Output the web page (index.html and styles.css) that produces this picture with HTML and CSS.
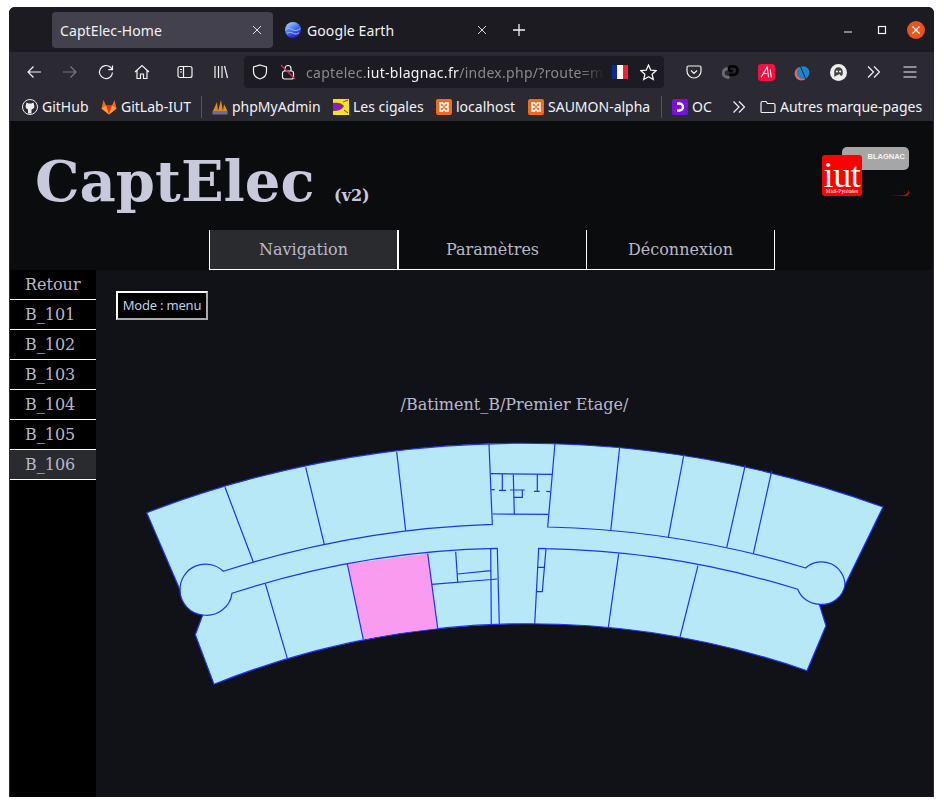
FILE: index.html
```html
<!DOCTYPE html>
<html lang="fr">
<head>
<meta charset="utf-8">
<title>CaptElec-Home</title>
<link rel="stylesheet" href="styles.css">
</head>
<body>
<div class="window">
  <div class="tabbar">
    <div class="tab tab-active"><span class="tab-title">CaptElec-Home</span><svg class="ico12" viewBox="0 0 12 12"><path d="M2 2l8 8M10 2l-8 8"/></svg></div>
    <div class="tab"><svg class="fav" viewBox="0 0 16 16"><defs><linearGradient id="ge" x1="0" y1="0" x2="0.6" y2="1"><stop offset="0" stop-color="#d5e2ff"/><stop offset=".5" stop-color="#4a7df0"/><stop offset="1" stop-color="#2a17c8"/></linearGradient></defs><circle cx="8" cy="8" r="8" fill="url(#ge)"/><path d="M0.600 8c3-3 5-1 7.400 0s5 .5 7.400-1.500M1.500 11.500c3-2 5-1 7 0s4 .5 5.500-1" fill="none" stroke="#a9c4ff" stroke-width="1"/></svg><span class="tab-title">Google Earth</span><svg class="ico12" viewBox="0 0 12 12"><path d="M2 2l8 8M10 2l-8 8"/></svg></div>
    <svg class="plus" viewBox="0 0 14 14"><path d="M7 1v12M1 7h12"/></svg>
    <div class="winctl">
      <svg class="ctl" viewBox="0 0 18 18"><path d="M5 11h8"/></svg>
      <svg class="ctl" viewBox="0 0 18 18"><rect x="5.500" y="5.500" width="7" height="7"/></svg>
      <div class="close"><svg viewBox="0 0 10 10"><path d="M1.500 1.500l7 7M8.500 1.500l-7 7"/></svg></div>
    </div>
  </div>

  <div class="toolbar">
    <div class="slot"><svg class="tb" viewBox="0 0 16 16"><path d="M15 8H2M7.500 2.500L2 8l5.500 5.500"/></svg></div>
    <div class="slot"><svg class="tb tb-off" viewBox="0 0 16 16"><path d="M1 8h13M8.500 2.500L14 8l-5.500 5.500"/></svg></div>
    <div class="slot"><svg class="tb" viewBox="0 0 16 16"><path d="M14.500 8.500A6.500 6.500 0 1 1 12.500 3.300L14.500 5.500M14.500 1.500v4.200h-4.200"/></svg></div>
    <div class="slot"><svg class="tb" viewBox="0 0 16 16"><path d="M1 8l7-6.500L15 8M3 6.500V14.500h3.500V10h3v4.500H13V6.500"/></svg></div>
    <div class="slot slot-sep"><svg class="tb" viewBox="0 0 16 16"><rect x="1" y="2.500" width="14" height="11" rx="2"/><path d="M6.500 2.500v11M3 5.500h2M3 8h2"/></svg></div>
    <div class="slot"><svg class="tb" viewBox="0 0 16 16"><path d="M2 2v12M5.500 2v12M9 2v12M11.500 2l3 12"/></svg></div>
    <div class="urlbar">
      <svg class="tb shield" viewBox="0 0 16 16"><path d="M8 1l6.500 2v4.500c0 4-3 6.500-6.500 7.500-3.500-1-6.500-3.500-6.500-7.500V3z"/></svg>
      <svg class="tb lock" viewBox="0 0 16 16"><rect x="2.500" y="7" width="11" height="8" rx="2"/><path d="M5 7V4.500a3 3 0 0 1 6 0V7"/><path class="lock-strike" d="M1 1l14 14"/></svg>
      <div class="url"><span class="dim">captelec.</span>iut-blagnac.fr<span class="dim">/index.php/?route=m</span></div>
      <div class="flag"><i class="fb"></i><i class="fw"></i><i class="fr"></i></div>
      <svg class="tb star" viewBox="0 0 16 16"><path d="M8 1l2.100 4.700 5.100.5-3.800 3.400 1.100 5L8 12l-4.500 2.600 1.100-5L.8 6.200l5.100-.5z"/></svg>
    </div>
    <div class="slot"><svg class="tb" viewBox="0 0 16 16"><path d="M2.500 2h11A1.500 1.500 0 0 1 15 3.500V7A7 7 0 0 1 1 7V3.500A1.500 1.500 0 0 1 2.500 2zM5 6.500l3 3 3-3"/></svg></div>
    <div class="slot"><svg class="ext" viewBox="0 0 18 18"><path d="M9 5H6a4.500 4.500 0 0 0-.5 9H8" fill="none" stroke="#6e6e6e" stroke-width="3"/><path d="M7.500 11.500H12a4.500 4.500 0 0 0 0-9H10a2.500 2.500 0 0 0 0 5h1.500" fill="none" stroke="#050505" stroke-width="3"/></svg></div>
    <div class="slot"><svg class="ext" viewBox="0 0 16 16"><rect width="16" height="16" rx="3" fill="#f5103f"/><path d="M3 12.500L8.500 3 10 12.500M5.500 9H9.500M11.500 5l1 7.500" fill="none" stroke="#fff"/></svg></div>
    <div class="slot"><svg class="ext" viewBox="0 0 16 16"><circle cx="7" cy="9" r="6.500" fill="#e5646a"/><circle cx="8.500" cy="8" r="6" fill="#1d86c9"/><path d="M5.500 1L11 14" stroke="#16324a"/></svg></div>
    <div class="slot"><svg class="ext" viewBox="0 0 16 16"><circle cx="8" cy="8" r="8" fill="#eee"/><path d="M4 12V7a4 4 0 0 1 8 0v2.500a1.500 1.500 0 0 1-3 0" fill="#444"/><circle cx="6.500" cy="7" r="1" fill="#eee"/><circle cx="9.500" cy="7" r="1" fill="#eee"/></svg></div>
    <div class="slot"><svg class="tb" viewBox="0 0 16 16"><path d="M2 2.500L7.500 8 2 13.500M8 2.500L13.500 8 8 13.500"/></svg></div>
    <div class="slot"><svg class="tb" viewBox="0 0 16 16"><path d="M1.500 3h13M1.500 8h13M1.500 13h13"/></svg></div>
  </div>

  <div class="bookmarks">
    <div class="bm bm-github"><svg class="fav" viewBox="0 0 16 16"><circle cx="8" cy="8" r="7.500" fill="#2b2a33" stroke="#eee"/><path d="M4 5.500L4.500 3.500l2 1h3l2-1 .5 2c1 2.500 0 4.500-2.500 5v4h-3.500v-4C4 10 3 8 4 5.500z" fill="#eee"/></svg><span>GitHub</span></div>
    <div class="bm bm-gitlab"><svg class="fav" viewBox="0 0 16 16"><path d="M8 15.500L.5 9.500 2.500 1 5 6.500h6l2.500-5.500 2 8.500z" fill="#f0691f"/><path d="M8 15.500L5 6.500h6z" fill="#e5331f"/><path d="M8 15.500L.5 9.500 5 6.500zM8 15.500l7.500-6L11 6.500z" fill="#fba124"/></svg><span>GitLab-IUT</span></div>
    <i class="bm-sep"></i>
    <div class="bm bm-pma"><svg class="fav" viewBox="0 0 16 16"><path d="M1 12L5 3l1 9zM6 12L9 1l2 11zM11 12L12 5l3.500 7z" fill="#e58a1f"/><rect x="0.500" y="12" width="15" height="3.500" fill="#6b6f9f"/></svg><span>phpMyAdmin</span></div>
    <div class="bm bm-cig"><svg class="fav" viewBox="0 0 16 16"><rect width="16" height="16" fill="#f5e616"/><path d="M0 4c5-1 9 0 11 3-2 4-6 5-11 5z" fill="#8b1fb8"/><path d="M10 3l5-2M11 11l4 3" stroke="#8b1fb8"/></svg><span>Les cigales</span></div>
    <div class="bm bm-local"><svg class="fav" viewBox="0 0 16 16"><rect width="16" height="16" rx="2" fill="#f26a1b"/><path d="M4 4h2.500l1.500 2 1.500-2H12v3l-2 1 2 1v3H9.500L8 10l-1.500 2H4V9l2-1-2-1z" fill="none" stroke="#fff" stroke-width="1.600"/></svg><span>localhost</span></div>
    <div class="bm bm-saumon"><svg class="fav" viewBox="0 0 16 16"><rect width="16" height="16" rx="2" fill="#f26a1b"/><path d="M4 4h2.500l1.500 2 1.500-2H12v3l-2 1 2 1v3H9.500L8 10l-1.500 2H4V9l2-1-2-1z" fill="none" stroke="#fff" stroke-width="1.600"/></svg><span>SAUMON-alpha</span></div>
    <i class="bm-sep"></i>
    <div class="bm bm-oc"><svg class="fav" viewBox="0 0 16 16"><rect width="16" height="16" rx="2" fill="#7b10dc"/><path d="M5 4.500h2.500a3.500 3.500 0 0 1 0 7H5" fill="none" stroke="#fff" stroke-width="2.400"/></svg><span>OC</span></div>
    <svg class="bm-more" viewBox="0 0 14 14"><path d="M1.500 1.500L7 7l-5.500 5.500M7 1.500L12.500 7 7 12.500"/></svg>
    <div class="bm bm-folder"><svg class="tb" viewBox="0 0 16 16"><path d="M1 4a1.500 1.500 0 0 1 1.500-1.500H6L7.500 4.500h6A1.500 1.500 0 0 1 15 6v6.500a1 1 0 0 1-1 1H2a1 1 0 0 1-1-1z"/></svg><span>Autres marque-pages</span></div>
  </div>

  <div class="page">
    <header class="head">
      <h1 class="title">CaptElec <small class="ver">(v2)</small></h1>
      <div class="logo">
        <div class="logo-grey">BLAGNAC</div>
        <svg class="logo-corner" viewBox="0 0 20 8"><defs><linearGradient id="lc" x1="0" y1="0" x2="1" y2="0"><stop offset="0" stop-color="#e00" stop-opacity="0"/><stop offset=".6" stop-color="#e00"/></linearGradient></defs><path d="M0 7.500H13Q18 7.500 20 2V4Q20 8 16 8H0Z" fill="url(#lc)"/></svg>
        <div class="logo-red"><span class="iut">iut</span><span class="midi">Midi-Pyrénées</span></div>
      </div>
    </header>
    <nav class="nav">
      <a class="nav-item nav-on">Navigation</a>
      <a class="nav-item">Paramètres</a>
      <a class="nav-item">Déconnexion</a>
    </nav>
    <div class="main">
      <aside class="side">
        <a class="side-item">Retour</a>
        <a class="side-item">B_101</a>
        <a class="side-item">B_102</a>
        <a class="side-item">B_103</a>
        <a class="side-item">B_104</a>
        <a class="side-item">B_105</a>
        <a class="side-item side-on">B_106</a>
      </aside>
      <section class="content">
        <div class="mode">Mode : menu</div>
        <p class="path">/Batiment_B/Premier Etage/</p>
        <svg class="plan" viewBox="96 430 837 270">
          <path class="floor" d="M146.700 512.700A1051 1051 0 0 1 883 507L845 585A23.500 23.500 0 0 1 819.300 604.300L826 625.700L807 670.700A848 848 0 0 0 214 684.300L195.300 634.700L202.700 615A25.500 25.500 0 0 1 180 590Z"/>
          <path class="room-on" d="M347.300 564L427.700 553.700L437.700 628.300A848 848 0 0 0 363.300 639.300Z"/>
          <path class="wall" d="M180 590A25.500 25.500 0 0 1 223.300 571.300A970 970 0 0 1 492.300 524.300L489 444"/>
          <path class="wall" d="M202.700 615A25.500 25.500 0 0 0 232 593.300A900 900 0 0 1 497.300 548.300L499.300 624.300"/>
          <path class="wall" d="M555 443.300L547.700 527A970 970 0 0 1 805.700 568A23.500 23.500 0 0 1 845 585"/>
          <path class="wall" d="M534.700 624L538.700 548.300L546 548.700A900 900 0 0 1 797.700 589.300A23.500 23.500 0 0 0 819.300 604.300"/>
          <path class="wall" d="M225 487.300L253.300 562M305.700 467.300L324.300 544.300M396.700 452L405.700 530.700"/>
          <path class="wall" d="M619.700 446.700L610.700 531M684 454L668.300 537.300M745.300 465L726.700 547.700M771.700 471L753.300 553.700"/>
          <path class="wall" d="M265.300 583.700L287.300 658.300M347.300 564L363.300 639.300M427.700 553.700L437.700 628.300"/>
          <path class="wall" d="M618.700 553.700L608.300 627.300M698 565.700L680 637"/>
          <path class="wall" d="M490.700 549L491.300 625M455.700 551.700L457.700 582.300M431.700 584.300L497.300 579M457.700 574L490.700 570.700"/>
          <path class="wall" d="M546 548.700L542.300 591.700H536.700M537.700 567.300H544.300"/>
          <path class="wall" d="M490.700 473.700L552.300 474.300M492.700 514L548.300 514.300M513.300 474.300L514.300 514"/>
          <path class="wall" d="M502.300 474V490M499 490.300H506M491.300 489.700H494.700M510 490H524.700M522.300 490.300V497.300H513.700M537.300 474.300V491.300M534 491.300H539.700M546.300 491.300L550 491.700"/>
        </svg>
      </section>
    </div>
  </div>
</div>
</body>
</html>
```
FILE: styles.css
```css
* { box-sizing: border-box; }
html, body { margin: 0; padding: 0; background: #fff; }
body { height: 807px; overflow: hidden; font-family: "Noto Sans", sans-serif; }
.window {
  margin: 7px 9px 0;
  width: 925px;
  height: 790px;
  display: flex;
  flex-direction: column;
  border-radius: 6px 6px 0 0;
  overflow: hidden;
  background: #1c1b22;
}
svg { display: block; flex: none; }

/* title bar */
.tabbar { height: 45px; display: flex; align-items: flex-start; padding: 5px 0 0 43px; background: #1c1b22; color: #f2f2f4; font-size: 14px; }
.tab { width: 221px; height: 36px; margin-right: 4px; padding: 0 10px 0 8px; display: flex; align-items: center; border-radius: 4px; }
.tab-active { background: #42414d; }
.tab-title { flex: 1; letter-spacing: .1px; }
.fav { width: 16px; height: 16px; margin-right: 6px; }
.ico12 { width: 12px; height: 12px; margin-right: 0; }
.ico12 path { fill: none; stroke: #ddd; stroke-width: 1; }
.plus { width: 14px; height: 14px; margin: 11px 0 0 10px; }
.plus path { fill: none; stroke: #f2f2f4; stroke-width: 1.300; }
.winctl { margin-left: auto; display: flex; align-items: center; height: 36px; gap: 16px; padding-right: 9px; }
.ctl { width: 18px; height: 18px; }
.ctl path, .ctl rect { fill: none; stroke: #f2f2f4; stroke-width: 1.200; }
.close { width: 18px; height: 18px; border-radius: 50%; background: #e95420; display: flex; align-items: center; justify-content: center; }
.close svg { width: 10px; height: 10px; }
.close path { fill: none; stroke: #fff; stroke-width: 1.300; }

/* toolbar */
.toolbar { height: 40px; background: #2b2a33; display: flex; align-items: center; padding-left: 7px; }
.slot { width: 36px; height: 32px; display: flex; align-items: center; justify-content: center; }
.slot-sep { margin-left: 7px; }
.tb { width: 16px; height: 16px; }
.tb path, .tb rect { fill: none; stroke: #f2f2f4; stroke-width: 1.200; }
.tb-off path { stroke: #77767e; }
.ext { width: 17px; height: 17px; }
.urlbar { width: 420px; height: 32px; margin: 0 12px 0 5px; background: #1c1b22; border-radius: 4px; display: flex; align-items: center; padding-left: 8px; color: #f2f2f4; font-size: 14px; }
.shield { margin-right: 12px; }
.lock { margin-right: 10px; }
.tb .lock-strike { stroke: #e22850; }
.url { width: 298px; white-space: nowrap; overflow: hidden; letter-spacing: .3px; -webkit-mask-image: linear-gradient(to right, #000 92%, transparent); mask-image: linear-gradient(to right, #000 92%, transparent); }
.dim { color: #8a898f; }
.flag { width: 16px; height: 14px; margin-left: 8px; display: flex; }
.flag i { flex: 1; }
.fb { background: #0a2a9c; }
.fw { background: #fff; }
.fr { background: #ee2233; }
.star { margin-left: 12px; width: 17px; height: 17px; }

/* bookmarks */
.bookmarks { height: 29px; background: #2b2a33; display: flex; align-items: center; padding-left: 13px; color: #f2f2f4; font-size: 14px; }
.bm { display: flex; align-items: center; white-space: nowrap; }
.bm .fav { margin-right: 4px; }
.bm-github { width: 79px; }
.bm-gitlab { width: 100px; }
.bm-sep { width: 1px; height: 22px; background: #55545d; margin-right: 10px; }
.bm-pma { width: 121px; }
.bm-cig { width: 103px; }
.bm-local { width: 92px; }
.bm-saumon { width: 133px; }
.bm-oc { width: 60px; margin-right: 0; }
.bm-more { width: 14px; height: 14px; margin-right: 14px; }
.bm-more path { fill: none; stroke: #f2f2f4; stroke-width: 1.200; }
.bm-folder .tb { margin-right: 4px; }

/* page */
.page { flex: 1; display: flex; flex-direction: column; background: #0b0c0e; font-family: "DejaVu Serif", serif; border-left: 1px solid #2b2b2f; border-right: 1px solid #2b2b2f; }
.head { height: 109px; display: flex; justify-content: space-between; padding: 0 24px 0 25px; }
.title { margin: 20px 0 0; font-size: 56px; line-height: 80px; font-weight: bold; color: #c9c9dc; white-space: nowrap; }
.ver { font-size: 16px; margin-left: 0; }
.logo { position: relative; width: 87px; height: 49px; margin-top: 26px; }
.logo-grey { position: absolute; left: 20px; top: 0; width: 67px; height: 23px; padding: 4px 4px 0 0; background: #a6a6a6; border-radius: 5px; color: #f4f4f4; font: bold 7.500px/12px "Liberation Sans", sans-serif; text-align: right; }
.logo-corner { position: absolute; right: 0; bottom: 0; width: 20px; height: 8px; }
.logo-red { position: absolute; left: 0; top: 8px; width: 40px; height: 41px; background: #f00; border-radius: 3px; color: #fff; text-align: center; font-family: "Liberation Serif", serif; overflow: hidden; }
.iut { display: block; font-size: 36px; line-height: 27px; margin-top: 7px; letter-spacing: -.3px; }
.midi { display: block; font-size: 5.500px; line-height: 4px; white-space: nowrap; }

.nav { height: 40px; display: flex; margin-left: 199px; }
.nav-item { width: 188px; height: 40px; display: flex; align-items: center; justify-content: center; font-size: 16px; color: #b8b8c8; border-left: 1px solid #fff; border-bottom: 1px solid #fff; }
.nav-item:nth-child(2) { width: 189px; border-left-width: 2px; }
.nav-item:nth-child(3) { width: 189px; border-right: 1px solid #fff; }
.nav-on { background: #2a2b2e; }

.main { flex: 1; display: flex; min-height: 0; }
.side { width: 86px; background: #000; }
.side-item { display: block; height: 30px; line-height: 28px; padding-top: 1px; padding-left: 15px; font-size: 16px; color: #b8b8c8; border-bottom: 1px solid #fff; }
.side-on { background: #2a2b2e; }
.content { flex: 1; background: #111218; padding: 21px 0 0; color: #b8b8c8; }
.mode { width: 92px; height: 29px; margin-left: 20px; background: #000; border: 2px solid; border-color: #fff #aaa #aaa #fff; font: 13px/25px "Noto Sans", sans-serif; text-align: center; color: #bcd0e8; white-space: nowrap; letter-spacing: -.2px; }
.path { margin: 75px 0 0; text-align: center; font-size: 16px; line-height: 20px; }
.plan { width: 837px; height: 270px; margin-top: 15px; }
.floor { fill: #b7e8f8; stroke: #1f33f5; stroke-width: 1.200; }
.room-on { fill: #f99cf0; }
.wall { fill: none; stroke: #1f33f5; stroke-width: 1.200; }
```
